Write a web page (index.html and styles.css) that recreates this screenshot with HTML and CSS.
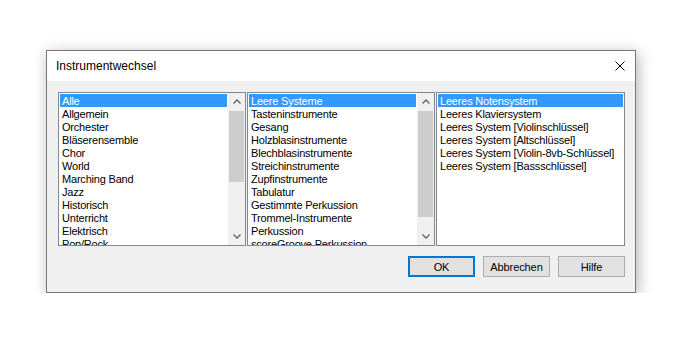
FILE: index.html
```html
<!DOCTYPE html>
<html lang="de">

<head>
    <meta charset="UTF-8">
    <title>Instrumentwechsel</title>
    <link rel="stylesheet" href="styles.css">
</head>

<body>
    <div class="dialog">
        <div class="titlebar">
            <span class="title">Instrumentwechsel</span>
            <svg class="close" width="10" height="10" viewBox="0 0 10 10">
                <path d="M0.5 0.5 L9.5 9.5 M9.5 0.5 L0.5 9.5" stroke="#000" stroke-width="1" fill="none" />
            </svg>
        </div>

        <div class="content">
            <div class="lists">
                <!-- Gruppen -->
                <div class="listbox">
                    <div class="items">
                        <div class="item selected">Alle</div>
                        <div class="item">Allgemein</div>
                        <div class="item">Orchester</div>
                        <div class="item">Bläserensemble</div>
                        <div class="item">Chor</div>
                        <div class="item">World</div>
                        <div class="item">Marching Band</div>
                        <div class="item">Jazz</div>
                        <div class="item">Historisch</div>
                        <div class="item">Unterricht</div>
                        <div class="item">Elektrisch</div>
                        <div class="item">Pop/Rock</div>
                        <div class="item">Kammermusik</div>
                    </div>
                    <div class="scrollbar">
                        <div class="arrow">
                            <svg width="8" height="5" viewBox="0 0 8 5"><path d="M0.5 4.5 L4 1 L7.5 4.5" /></svg>
                        </div>
                        <div class="track">
                            <div class="thumb" style="height: 71px"></div>
                        </div>
                        <div class="arrow">
                            <svg width="8" height="5" viewBox="0 0 8 5"><path d="M0.5 0.5 L4 4 L7.5 0.5" /></svg>
                        </div>
                    </div>
                </div>

                <!-- Familien -->
                <div class="listbox">
                    <div class="items">
                        <div class="item selected">Leere Systeme</div>
                        <div class="item">Tasteninstrumente</div>
                        <div class="item">Gesang</div>
                        <div class="item">Holzblasinstrumente</div>
                        <div class="item">Blechblasinstrumente</div>
                        <div class="item">Streichinstrumente</div>
                        <div class="item">Zupfinstrumente</div>
                        <div class="item">Tabulatur</div>
                        <div class="item">Gestimmte Perkussion</div>
                        <div class="item">Trommel-Instrumente</div>
                        <div class="item">Perkussion</div>
                        <div class="item">scoreGroove Perkussion</div>
                    </div>
                    <div class="scrollbar">
                        <div class="arrow">
                            <svg width="8" height="5" viewBox="0 0 8 5"><path d="M0.5 4.5 L4 1 L7.5 4.5" /></svg>
                        </div>
                        <div class="track">
                            <div class="thumb" style="height: 106px"></div>
                        </div>
                        <div class="arrow">
                            <svg width="8" height="5" viewBox="0 0 8 5"><path d="M0.5 0.5 L4 4 L7.5 0.5" /></svg>
                        </div>
                    </div>
                </div>

                <!-- Instrumente -->
                <div class="listbox wide">
                    <div class="items">
                        <div class="item selected">Leeres Notensystem</div>
                        <div class="item">Leeres Klaviersystem</div>
                        <div class="item">Leeres System [Violinschlüssel]</div>
                        <div class="item">Leeres System [Altschlüssel]</div>
                        <div class="item">Leeres System [Violin-8vb-Schlüssel]</div>
                        <div class="item">Leeres System [Bassschlüssel]</div>
                    </div>
                </div>
            </div>

            <div class="buttons">
                <button class="btn default">OK</button>
                <button class="btn">Abbrechen</button>
                <button class="btn">Hilfe</button>
            </div>
        </div>
    </div>
</body>

</html>
```

FILE: styles.css
```css
body {
    margin: 0;
    background-color: #fff;
    font-family: "Liberation Sans", Arial, sans-serif;
    font-size: 11px;
    color: #000;
}

.dialog {
    margin: 50px 0 0 46px;
    width: 590px;
    box-sizing: border-box;
    border: 1px solid #777;
    box-shadow: 2px 3px 14px rgba(0, 0, 0, 0.3);
}

.titlebar {
    height: 30px;
    background-color: #fff;
    display: flex;
    align-items: center;
    justify-content: space-between;
    padding: 0 10px 0 9px;
}

.title {
    font-size: 12px;
}

.close {
    margin-top: -1px;
}

.content {
    background-color: #f0f0f0;
    padding: 11px 10px 15px 11px;
}

.lists {
    display: flex;
    gap: 1px;
}

.listbox {
    width: 188px;
    height: 154px;
    box-sizing: border-box;
    border: 1px solid #828790;
    background-color: #fff;
    display: flex;
}

.listbox.wide {
    width: 189px;
}

.items {
    flex: 1;
    overflow: hidden;
    padding: 1px;
}

.item {
    height: 13px;
    line-height: 14px;
    padding-left: 2px;
    white-space: nowrap;
    letter-spacing: -0.2px;
}

.item.selected {
    background-color: #3399ff;
    color: #fff;
}

.scrollbar {
    width: 17px;
    background-color: #f0f0f0;
    display: flex;
    flex-direction: column;
}

.arrow {
    height: 17px;
    display: flex;
    align-items: center;
    justify-content: center;
}

.arrow svg path {
    fill: none;
    stroke: #606060;
    stroke-width: 1.3;
}

.track {
    flex: 1;
}

.thumb {
    margin: 1px 1px 0 1px;
    background-color: #cdcdcd;
}

.buttons {
    display: flex;
    justify-content: flex-end;
    gap: 8px;
    margin-top: 10px;
}

.btn {
    width: 67px;
    height: 21px;
    box-sizing: border-box;
    border: 1px solid #adadad;
    background-color: #e1e1e1;
    font-family: inherit;
    font-size: 11px;
    letter-spacing: -0.1px;
    color: #000;
    padding: 0;
}

.btn.default {
    border: 2px solid #0078d7;
}
```
